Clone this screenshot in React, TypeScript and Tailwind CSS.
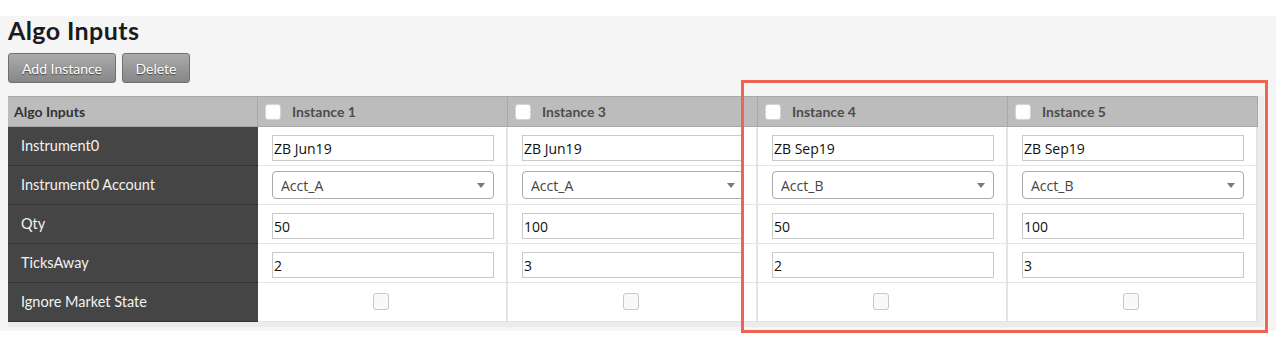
const instances = [
  { name: 'Instance 1', instrument: 'ZB Jun19', account: 'Acct_A', qty: '50', ticks: '2' },
  { name: 'Instance 3', instrument: 'ZB Jun19', account: 'Acct_A', qty: '100', ticks: '3' },
  { name: 'Instance 4', instrument: 'ZB Sep19', account: 'Acct_B', qty: '50', ticks: '2' },
  { name: 'Instance 5', instrument: 'ZB Sep19', account: 'Acct_B', qty: '100', ticks: '3' },
];

type Inst = (typeof instances)[number];

const rows: { label: string; kind: 'text' | 'select' | 'check'; field?: keyof Inst }[] = [
  { label: 'Instrument0', kind: 'text', field: 'instrument' },
  { label: 'Instrument0 Account', kind: 'select', field: 'account' },
  { label: 'Qty', kind: 'text', field: 'qty' },
  { label: 'TicksAway', kind: 'text', field: 'ticks' },
  { label: 'Ignore Market State', kind: 'check' },
];

const Box = ({ className = '' }: { className?: string }) => (
  <input
    type="checkbox"
    readOnly
    className={`appearance-none w-4 h-4 rounded-[3px] border ${className}`}
  />
);

const Cell = ({ kind, value }: { kind: string; value?: string }) => {
  if (kind === 'check') {
    return (
      <div className="flex h-full items-center justify-center pr-[2px] pb-[1px]">
        <Box className="h-[17px] border-[#c8c8c8] bg-[#f9f9f9]" />
      </div>
    );
  }
  if (kind === 'select') {
    return (
      <div className="relative ml-[14px] mt-[5px] w-[222px]">
        <select
          defaultValue={value}
          className="block h-[28px] w-full appearance-none rounded-[4px] border border-[#a9a9a9] bg-white pl-[8px] text-[14px] text-[#444] outline-none font-['Open_Sans',sans-serif]"
        >
          <option>{value}</option>
        </select>
        <span className="pointer-events-none absolute right-[9px] top-[12px] h-0 w-0 border-x-[4px] border-t-[5px] border-x-transparent border-t-[#7a7a7a]" />
      </div>
    );
  }
  return (
    <input
      readOnly
      defaultValue={value}
      className="ml-[14px] mt-[8px] block h-[26px] w-[222px] border border-[#c9c9c9] bg-white pl-[1px] text-[14px] text-[#111] outline-none font-['Open_Sans',sans-serif]"
    />
  );
};

const App = () => {
  return (
    <div className="relative h-[350px] w-[1276px] bg-white pt-[16px] font-['Lato',sans-serif]">
      <section className="h-[315px] bg-[#f5f5f5] px-[8px]">
        <h1 className="text-[25px] font-bold leading-[29px] tracking-[0.4px] text-[#1b1b1b]">Algo Inputs</h1>

        <div className="mt-[8px] flex gap-[6px]">
          <button className="h-[30px] w-[108px] rounded-[3px] border border-[#707070] bg-gradient-to-b from-[#ababab] to-[#878787] text-[14px] text-white [text-shadow:0_1px_1px_rgba(0,0,0,0.55)]">
            Add Instance
          </button>
          <button className="h-[30px] w-[68px] rounded-[3px] border border-[#707070] bg-gradient-to-b from-[#ababab] to-[#878787] text-[14px] text-white [text-shadow:0_1px_1px_rgba(0,0,0,0.55)]">
            Delete
          </button>
        </div>

        <div className="mt-[13px] w-[1256px] bg-[#ececec] pb-[5px] pr-[6px]">
          <div className="grid grid-cols-[250px_250px_250px_250px_250px]">
            <div className="flex h-[31px] items-center border-y border-r border-[#a8a8a8] bg-[#bcbcbc] pl-[6px] text-[14px] font-bold text-[#333]">
              Algo Inputs
            </div>
            {instances.map((inst) => (
              <div
                key={inst.name}
                className="flex h-[31px] items-center gap-[11px] border-y border-r border-[#a8a8a8] bg-[#bcbcbc] pl-[7px] text-[14px] font-bold text-[#4d4d4d]"
              >
                <Box className="border-[#d4d4d4] bg-white" />
                {inst.name}
              </div>
            ))}

            {rows.map((row) => (
              <div key={row.label} className="contents">
                <div className="flex h-[39px] items-center border-b border-[#363636] bg-[#454545] pl-[13px] text-[14.5px] text-[#f2f2f2]">
                  {row.label}
                </div>
                {instances.map((inst) => (
                  <div
                    key={inst.name}
                    className="h-[39px] border-b border-r-2 border-[#e4e4e4] bg-white"
                  >
                    <Cell kind={row.kind} value={row.field ? inst[row.field] : undefined} />
                  </div>
                ))}
              </div>
            ))}
          </div>
        </div>
      </section>

      {/* highlight box drawn over the last two instances */}
      <div className="pointer-events-none absolute left-[741px] top-[80px] h-[253px] w-[527px] border-[3px] border-[#ef6351]" />
    </div>
  );
};

export default App;
